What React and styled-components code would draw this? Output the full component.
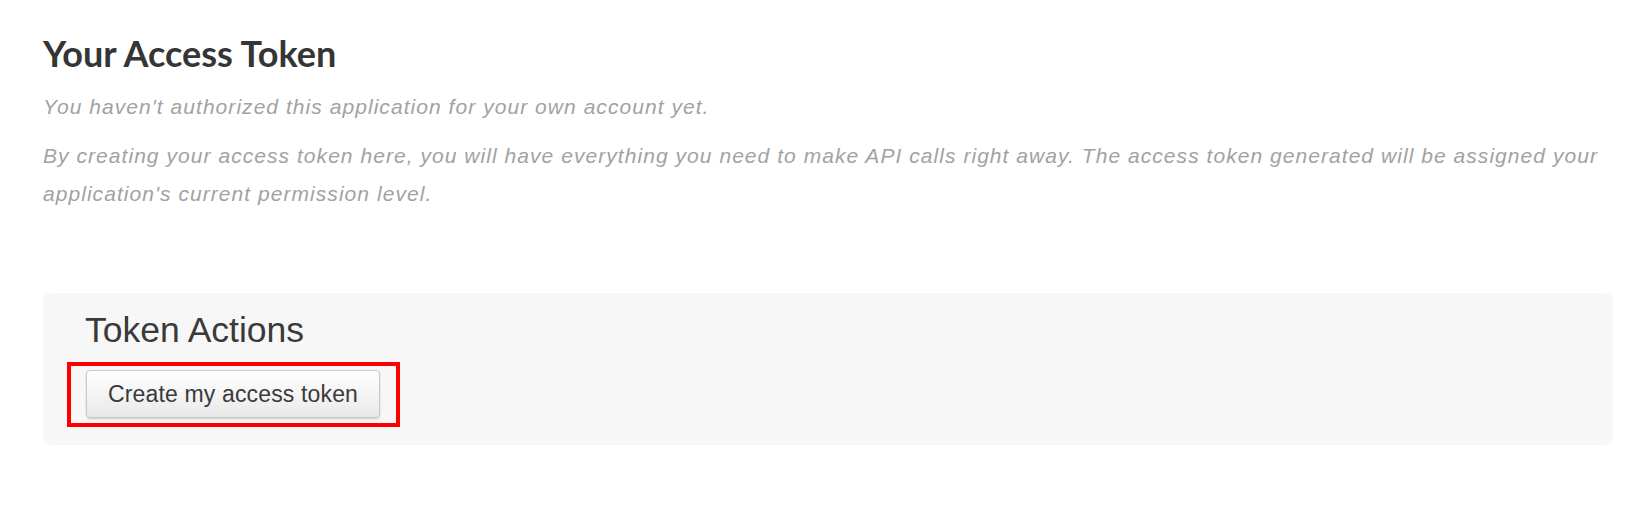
import React from 'react'
import styled, {createGlobalStyle} from 'styled-components'

const GlobalStyle = createGlobalStyle`
  html, body {
    margin: 0;
    padding: 0;
    background: #ffffff;
  }
`

const Page = styled.div`
  width: 1570px;
  padding: 31px 0 0 43px;
  font-family: 'Liberation Sans', Arial, sans-serif;
`

const Title = styled.h2`
  margin: 0;
  font-family: Lato, 'Open Sans', sans-serif;
  font-weight: 700;
  font-size: 36px;
  line-height: 44px;
  color: #353535;
`

// intro copy, italic grey
const Note = styled.p`
  margin: ${(p) => p.$top}px 0 0;
  font-style: italic;
  font-size: 21px;
  letter-spacing: 1.05px;
  line-height: 38px;
  color: #a2a2a2;
`

const Panel = styled.section`
  margin-top: 80px;
  padding: 17px 42px 18px;
  background: #f7f7f7;
  border-radius: 8px;
`

const PanelTitle = styled.h3`
  margin: 0;
  font-weight: 400;
  font-size: 35.5px;
  line-height: 40px;
  color: #3a3a3a;
`

const Highlight = styled.div`
  display: inline-block;
  margin: 12px 0 0 -18px;
  padding: 4px 16px 5px 15px;
  border: 4px solid #ff0000;
`

const Button = styled.button`
  display: block;
  height: 48px;
  padding: 0 21px;
  font-family: 'Liberation Sans', Arial, sans-serif;
  font-size: 23px;
  letter-spacing: 0.15px;
  color: #3a3a3a;
  background: linear-gradient(#ffffff, #e9e9e9);
  border: 1px solid #c9c9c9;
  border-radius: 4px;
  box-shadow: 0 1px 2px rgba(0, 0, 0, 0.18);
  cursor: pointer;
`

export default function App() {
  return (
    <>
      <GlobalStyle />
      <Page>
        <Title>Your Access Token</Title>
        <Note $top={13}>You haven't authorized this application for your own account yet.</Note>
        <Note $top={11}>
          By creating your access token here, you will have everything you need to make API calls
          right away. The access token generated will be assigned your application's current
          permission level.
        </Note>
        <Panel>
          <PanelTitle>Token Actions</PanelTitle>
          <Highlight>
            <Button type="button">Create my access token</Button>
          </Highlight>
        </Panel>
      </Page>
    </>
  )
}
